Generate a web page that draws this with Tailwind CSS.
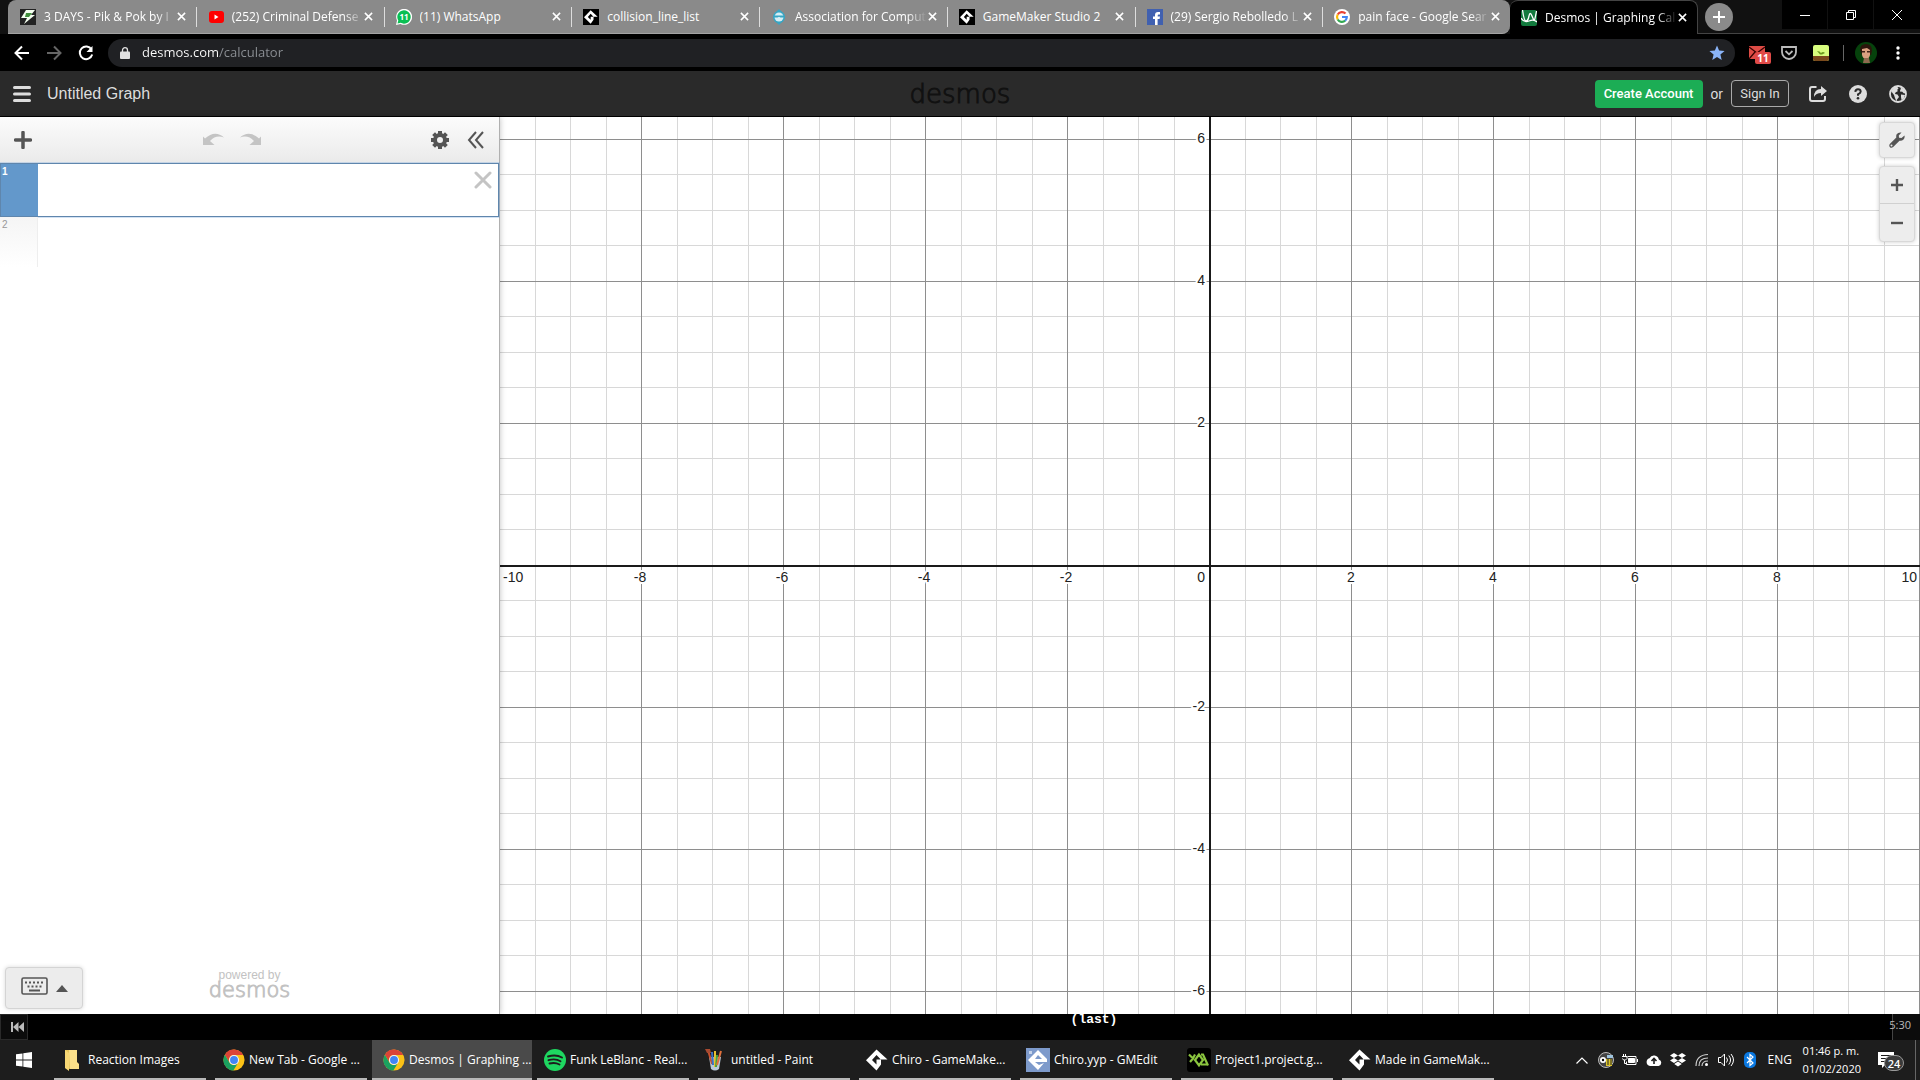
<!DOCTYPE html>
<html lang="en">
<head>
<meta charset="utf-8">
<title>Desmos | Graphing Calculator</title>
<script src="https://cdn.jsdelivr.net/npm/@tailwindcss/browser@4"></script>
</head>
<body class="flex h-screen flex-col overflow-hidden bg-black font-['Open_Sans','Noto_Sans',sans-serif] text-xs text-white">

<svg class="hidden" aria-hidden="true">
  <symbol id="x" viewBox="0 0 10 10"><path d="M1 1l8 8M9 1L1 9" stroke="currentColor" stroke-width="1.700" fill="none"/></symbol>
  <symbol id="gm" viewBox="0 0 22 22"><path d="M10.500 0.500L21.500 10.500H15V15.500L10.500 21.500L0 11.200ZM10.500 6L6 11L10.500 15.500V10.500H14.800Z" fill="#fff" fill-rule="evenodd"/></symbol>
  <symbol id="chrome" viewBox="0 0 24 24"><circle cx="12" cy="12" r="11.500" fill="#fbc116"/><path d="M2 6.200A11.500 11.500 0 0 1 22 6.500H12A5.500 5.500 0 0 0 7.200 15Z" fill="#db4437"/><path d="M2 6.200L7.200 15A5.500 5.500 0 0 0 16.500 15L11.300 23.500A11.500 11.500 0 0 1 2 6.200Z" fill="#1aa260"/><circle cx="12" cy="12" r="5.500" fill="#f4f4f4"/><circle cx="12" cy="12" r="4.300" fill="#4285f4"/></symbol>
</svg>

<!-- Tab strip -->
<header class="flex h-[34px] shrink-0 bg-[#111] pl-2">
  <nav id="tabs" class="flex min-w-0 flex-1 rounded-tl-lg rounded-r-lg border-b border-[#a4a4a4] bg-[#8a8a8a]" aria-label="Tabs">
    <div class="flex min-w-0 flex-1 items-center pl-3">
      <svg class="size-4 shrink-0" viewBox="0 0 16 16"><path fill="#222" d="M0 0h16v16H0z"/><path d="M6 1h9l-4 5h4L4 15l3-6H1z" fill="#f4fff0"/><path d="M6 4h6l-3 4H5z" fill="#3f8f3b"/></svg>
      <a href="#" class="ml-2 w-[132px] overflow-hidden whitespace-nowrap mask-r-from-85%">3 DAYS - Pik &amp; Pok by I</a>
      <button class="grid h-4 w-[10px] place-items-center" aria-label="Close tab"><svg class="size-[9px]"><use href="#x"/></svg></button>
    </div>
    <div class="relative flex min-w-0 flex-1 items-center pl-3">
      <i class="absolute left-0 h-5 w-px bg-[#ddd]"></i>
      <svg class="size-4 shrink-0" viewBox="0 0 16 16"><rect x="1" y="2" width="15" height="12" rx="3" fill="#f00"/><path d="M6.500 5.500v5l4-2.500z" fill="#fff"/></svg>
      <a href="#" class="ml-2 w-[132px] overflow-hidden whitespace-nowrap mask-r-from-85%">(252) Criminal Defense</a>
      <button class="grid h-4 w-[10px] place-items-center" aria-label="Close tab"><svg class="size-[9px]"><use href="#x"/></svg></button>
    </div>
    <div class="relative flex min-w-0 flex-1 items-center pl-3">
      <i class="absolute left-0 h-5 w-px bg-[#ddd]"></i>
      <svg class="size-4 shrink-0" viewBox="0 0 16 16"><path d="M0 16l1-4.500A8 8 0 1 1 4.500 15z" fill="#fff"/><path d="M1.500 14.500l.8-3A6.700 6.700 0 1 1 4.700 13.800z" fill="#0abf53"/><text x="8" y="11" font-size="8" font-weight="700" text-anchor="middle" fill="#fff">11</text></svg>
      <a href="#" class="ml-2 w-[132px] overflow-hidden whitespace-nowrap">(11) WhatsApp</a>
      <button class="grid h-4 w-[10px] place-items-center" aria-label="Close tab"><svg class="size-[9px]"><use href="#x"/></svg></button>
    </div>
    <div class="relative flex min-w-0 flex-1 items-center pl-3">
      <i class="absolute left-0 h-5 w-px bg-[#ddd]"></i>
      <span class="grid size-4 shrink-0 place-items-center bg-black"><svg class="size-[14px]"><use href="#gm"/></svg></span>
      <a href="#" class="ml-2 w-[132px] overflow-hidden whitespace-nowrap">collision_line_list</a>
      <button class="grid h-4 w-[10px] place-items-center" aria-label="Close tab"><svg class="size-[9px]"><use href="#x"/></svg></button>
    </div>
    <div class="relative flex min-w-0 flex-1 items-center pl-3">
      <i class="absolute left-0 h-5 w-px bg-[#ddd]"></i>
      <svg class="size-4 shrink-0" viewBox="0 0 16 16"><path d="M8 0l3 3 3 5-3 5-3 3-3-3-3-5 3-5z" fill="#37a5c4"/><circle cx="8" cy="8" r="6" fill="#37a5c4"/><circle cx="8" cy="8" r="4.500" fill="#d6eef5"/><path d="M3 6.500h10v2H9.500L8 7.800l-1.500.7H3z" fill="#37a5c4"/></svg>
      <a href="#" class="ml-2 w-[132px] overflow-hidden whitespace-nowrap mask-r-from-85%">Association for Comput</a>
      <button class="grid h-4 w-[10px] place-items-center" aria-label="Close tab"><svg class="size-[9px]"><use href="#x"/></svg></button>
    </div>
    <div class="relative flex min-w-0 flex-1 items-center pl-3">
      <i class="absolute left-0 h-5 w-px bg-[#ddd]"></i>
      <span class="grid size-4 shrink-0 place-items-center bg-black"><svg class="size-[14px]"><use href="#gm"/></svg></span>
      <a href="#" class="ml-2 w-[132px] overflow-hidden whitespace-nowrap">GameMaker Studio 2</a>
      <button class="grid h-4 w-[10px] place-items-center" aria-label="Close tab"><svg class="size-[9px]"><use href="#x"/></svg></button>
    </div>
    <div class="relative flex min-w-0 flex-1 items-center pl-3">
      <i class="absolute left-0 h-5 w-px bg-[#ddd]"></i>
      <svg class="size-4 shrink-0" viewBox="0 0 16 16"><path fill="#4060b0" d="M0 0h16v16H0z"/><path d="M8 16V10H6V7.500h2V6q0-3 3-3h2v2.500h-1.300q-1 0-1 1v1H13L12.600 10h-2v6z" fill="#fff"/></svg>
      <a href="#" class="ml-2 w-[132px] overflow-hidden whitespace-nowrap mask-r-from-85%">(29) Sergio Rebolledo L</a>
      <button class="grid h-4 w-[10px] place-items-center" aria-label="Close tab"><svg class="size-[9px]"><use href="#x"/></svg></button>
    </div>
    <div class="relative flex min-w-0 flex-1 items-center pl-3">
      <i class="absolute left-0 h-5 w-px bg-[#ddd]"></i>
      <svg class="size-4 shrink-0" viewBox="0 0 16 16" fill="none" stroke-width="2.200"><circle cx="8" cy="8" r="8" fill="#fff"/><path d="M11.500 4.500A5 5 0 0 0 3.700 5.500" stroke="#ea4335"/><path d="M3.700 5.500a5 5 0 0 0 0 5" stroke="#fbbc05"/><path d="M3.700 10.500a5 5 0 0 0 7.500 1.200" stroke="#34a853"/><path d="M8 8h4.800a5 5 0 0 1-1.600 3.700" stroke="#4285f4"/></svg>
      <a href="#" class="ml-2 w-[132px] overflow-hidden whitespace-nowrap mask-r-from-85%">pain face - Google Sear</a>
      <button class="grid h-4 w-[10px] place-items-center" aria-label="Close tab"><svg class="size-[9px]"><use href="#x"/></svg></button>
    </div>
  </nav>
  <div class="flex w-[188px] shrink-0 items-center rounded-t-lg border-t border-r border-[#444] bg-black pl-[11px]">
    <svg class="size-4 shrink-0" viewBox="0 0 16 16"><rect width="16" height="16" rx="2" fill="#127a3d"/><path d="M1.500 0Q3 11 5 11T8 6t3 0 2.500 4T15.500 1M0 8q3 5 8 3t8 1" fill="none" stroke="#fff" stroke-width="1.300"/></svg>
    <a href="#" aria-current="page" class="ml-2 w-[132px] overflow-hidden whitespace-nowrap mask-r-from-85%">Desmos | Graphing Cal</a>
    <button class="grid h-4 w-[10px] place-items-center" aria-label="Close tab"><svg class="size-[9px]"><use href="#x"/></svg></button>
  </div>
  <div class="flex w-[222px] shrink-0 items-start border-b border-[#444]">
    <button class="mt-[3px] ml-[7px] grid size-7 place-items-center rounded-full bg-[#8a8a8a]" aria-label="New tab"><svg class="size-3" viewBox="0 0 12 12"><path d="M6 0v12M0 6h12" stroke="#fff" stroke-width="2"/></svg></button>
    <div class="ml-auto flex h-[29px] gap-px">
      <button class="grid w-[45px] place-items-center bg-black" aria-label="Minimize"><svg class="size-[10px]" viewBox="0 0 10 10"><path d="M0 5.500h10" stroke="#fff"/></svg></button>
      <button class="grid w-[45px] place-items-center bg-black" aria-label="Restore"><svg class="size-[10px]" viewBox="0 0 10 10" fill="none" stroke="#fff"><path d="M.5 2.500h7v7h-7zM2.500 2.500v-2h7v7h-2"/></svg></button>
      <button class="grid w-[46px] place-items-center bg-black" aria-label="Close"><svg class="size-[10px]" viewBox="0 0 10 10"><path d="M0 0l10 10M10 0L0 10" stroke="#fff"/></svg></button>
    </div>
  </div>
</header>

<!-- Address bar -->
<div class="flex h-[37px] shrink-0 items-center bg-black pr-5 pl-[14px]">
  <button aria-label="Back"><svg class="size-4" viewBox="0 0 16 16" fill="none" stroke="#fff" stroke-width="2"><path d="M15 8H2M8 1.500L1.500 8L8 14.500"/></svg></button>
  <button aria-label="Forward" class="ml-4"><svg class="size-4" viewBox="0 0 16 16" fill="none" stroke="#666" stroke-width="2"><path d="M1 8h13M8 1.500L14.500 8L8 14.500"/></svg></button>
  <button aria-label="Reload" class="ml-4"><svg class="size-4" viewBox="0 0 16 16" fill="none" stroke="#fff" stroke-width="2"><path d="M13.500 4.500A6.300 6.300 0 1 0 14.200 9.500"/><path d="M14.500 1v6h-6z" fill="#fff" stroke="none"/></svg></button>
  <div class="ml-[14px] flex h-7 flex-1 items-center rounded-full bg-[#202124] pr-[10px] pl-3">
    <svg class="h-3 w-[10px]" viewBox="0 0 10 12"><rect y="4.500" width="10" height="7.500" rx="1" fill="#e0e0e0"/><path d="M2.500 5V3.200a2.500 2.500 0 0 1 5 0V5" fill="none" stroke="#e0e0e0" stroke-width="1.300"/></svg>
    <input aria-label="Address" value="desmos.com/calculator" class="ml-3 flex-1 bg-[linear-gradient(to_right,#fff_77px,#8d9196_77px)] bg-clip-text text-[13px] text-transparent outline-none">
    <svg class="size-4" viewBox="0 0 16 16"><path d="M8 0.500l2.100 5.100 5.500.4-4.200 3.600 1.300 5.400L8 12.100 3.300 15l1.300-5.400L.4 6l5.500-.4z" fill="#8ab4f8"/></svg>
  </div>
  <button aria-label="Mail, 11 unread" class="relative ml-[14px] h-5 w-6">
    <svg class="h-4 w-4" viewBox="0 0 16 16"><rect y="1" width="16" height="13" fill="#dd4b45"/><path d="M0 2l8 6 8-6M0 14l6-7M16 14l-6-7" fill="none" stroke="#300" stroke-width="1.200"/></svg>
    <span class="absolute top-[9px] left-[6px] grid h-3 w-4 place-items-center rounded-xs bg-[#e04a47] text-[10px] leading-none font-bold">11</span>
  </button>
  <button aria-label="Pocket" class="ml-2"><svg class="size-4" viewBox="0 0 16 16" fill="none" stroke="#bbb" stroke-width="1.800"><path d="M1 2h14v5a7 7 0 0 1-14 0z"/><path d="M4.500 6L8 9.300 11.500 6"/></svg></button>
  <button aria-label="Garden" class="ml-4"><svg class="size-4" viewBox="0 0 16 16"><rect width="16" height="16" rx="2" fill="#d8fd7e"/><path d="M0 11h16v3a2 2 0 0 1-2 2H2a2 2 0 0 1-2-2z" fill="#7a4a1c"/><path d="M4 6q3 0 4 2 2-2 4 0l-3 1.500H7z" fill="#6a9a1e"/></svg></button>
  <i class="ml-[14px] h-4 w-px bg-[#666]"></i>
  <button aria-label="Profile" class="ml-[11px]"><svg class="size-[22px]" viewBox="0 0 22 22"><circle cx="11" cy="11" r="11" fill="#06420c"/><path d="M5 8q0-6 6-6 6 0 6 7l-1 4H7z" fill="#2c150c"/><path d="M7 7l5-1 3 2v5q-1 4-4 4t-4-4z" fill="#d9a080"/><path d="M7 9h3v1.500H7zM12 9h3v1.500h-3z" fill="#3e2117"/><path d="M9 16h5l1 5H8z" fill="#8e6a50"/></svg></button>
  <button aria-label="Menu" class="ml-[19px]"><svg class="h-4 w-1" viewBox="0 0 4 16" fill="#fff"><circle cx="2" cy="3" r="1.700"/><circle cx="2" cy="8" r="1.700"/><circle cx="2" cy="13" r="1.700"/></svg></button>
</div>

<!-- Desmos header -->
<div class="grid h-[46px] shrink-0 grid-cols-[1fr_auto_1fr] items-center border-b border-black bg-[#2a2a2a] px-[13px] font-['Liberation_Sans',sans-serif] text-[#ddd]">
  <div class="flex items-center">
    <button aria-label="Open menu"><svg class="h-4 w-[18px]" viewBox="0 0 18 16" stroke="#ddd" stroke-width="3" stroke-linecap="round"><path d="M1.500 1.500h15M1.500 8h15M1.500 14.500h15"/></svg></button>
    <h1 class="ml-4 text-base">Untitled Graph</h1>
  </div>
  <div class="font-['DejaVu_Sans'] text-[26px] leading-none font-extralight text-[#111] [-webkit-text-stroke:1px_#111]">desmos</div>
  <div class="flex items-center justify-end">
    <button class="h-7 w-[108px] rounded-sm bg-[#1cad55] font-[Roboto] text-[13px] font-medium text-white">Create Account</button>
    <span class="mx-2 text-sm">or</span>
    <button class="h-[27px] w-[58px] rounded-sm border border-[#aaa] font-[Roboto] text-[13px]">Sign In</button>
    <button aria-label="Share" class="ml-5"><svg class="size-[18px]" viewBox="0 0 18 18"><path d="M7.500 2H3a2 2 0 0 0-2 2v10a2 2 0 0 0 2 2h11a2 2 0 0 0 2-2v-3" fill="none" stroke="#ddd" stroke-width="2"/><path d="M12 1l6 5-6 5V8q-5 0-7 4 0-8 7-8z" fill="#ddd"/></svg></button>
    <button aria-label="Help" class="ml-[22px]"><svg class="size-[18px]" viewBox="0 0 18 18"><circle cx="9" cy="9" r="9" fill="#ddd"/><path d="M6.300 6.800Q6.500 4.200 9 4.200t2.700 2.300Q11.700 8 9 9.300v1.500" fill="none" stroke="#2a2a2a" stroke-width="2"/><circle cx="9" cy="13.300" r="1.300" fill="#2a2a2a"/></svg></button>
    <button aria-label="Language" class="ml-[22px]"><svg class="size-[18px]" viewBox="0 0 18 18"><circle cx="9" cy="9" r="8" fill="none" stroke="#ddd" stroke-width="1.800"/><path d="M2 6l3-4 3-.5 1.500 2L8 5l1 1-2.500 1.500L6 9l2.500.5L10 12l-2 2.500-.5 2L6 13 5 10zM11 2l4 2 1.500 4-1.500.5-2-2-1.500.5-.5-2 1-1zM12 9.500l4 .5-1.500 4-2 1-.5-3z" fill="#ddd"/></svg></button>
  </div>
</div>

<main class="flex min-h-0 flex-1 bg-white font-['Liberation_Sans',sans-serif]">
  <!-- Expression list -->
  <section class="z-10 flex w-[500px] shrink-0 flex-col border-r border-[#b0b0b0] bg-white shadow-[0_0_6px_rgba(0,0,0,0.25)]">
    <div class="flex h-[46px] shrink-0 items-center bg-linear-to-b from-[#fcfcfc] to-[#eaeaea] pr-[15px] pl-[14px]">
      <button aria-label="Add item"><svg class="size-[18px]" viewBox="0 0 18 18"><path d="M9 1.500v15M1.500 9h15" stroke="#555" stroke-width="3.500" stroke-linecap="round"/></svg></button>
      <div class="mx-auto flex gap-4">
        <button aria-label="Undo"><svg class="h-[14px] w-[21px]" viewBox="0 0 21 14"><path d="M0 3.500l2 2Q12-3.500 21 4.500 13 1.500 7 8l4.500 4H0z" fill="#c4c4c4"/></svg></button>
        <button aria-label="Redo"><svg class="h-[14px] w-[21px]" viewBox="0 0 21 14"><path d="M21 3.500l-2 2Q9-3.500 0 4.500 8 1.500 14 8l-4.500 4H21z" fill="#c4c4c4"/></svg></button>
      </div>
      <button aria-label="Edit list"><svg class="size-[18px]" viewBox="0 0 18 18" fill="none" stroke="#555"><circle cx="9" cy="9" r="5" stroke-width="4"/><path d="M9 0v3M9 15v3M0 9h3M15 9h3M2.600 2.600l2.200 2.200M13.200 13.200l2.200 2.200M15.400 2.600l-2.200 2.200M4.800 13.200l-2.200 2.200" stroke-width="4"/></svg></button>
      <button aria-label="Hide list" class="ml-[18px]"><svg class="h-[18px] w-[17px]" viewBox="0 0 17 18" fill="none" stroke="#555" stroke-width="2"><path d="M9 1L2 9l7 8M16 1L9 9l7 8"/></svg></button>
    </div>
    <div class="flex h-[54px] shrink-0 border border-[#5f86ad] bg-white ring-1 ring-[#6ca0d8]/30">
      <label for="expr" class="w-[37px] bg-[#6398cb] pt-[2px] pl-px text-[10px] leading-3 font-bold">1</label>
      <input id="expr" class="min-w-0 flex-1 px-3 text-lg text-black outline-none">
      <button aria-label="Delete expression" class="mt-[7px] mr-[6px] size-[18px]"><svg class="size-[18px]" viewBox="0 0 18 18"><path d="M2 2l14 14M16 2L2 16" stroke="#c4c4c4" stroke-width="3" stroke-linecap="round"/></svg></button>
    </div>
    <div class="h-[50px] w-[38px] border-r border-[#eee] bg-linear-to-b from-[#f5f5f5] to-white pt-[1px] pl-[2px] text-[10px] text-[#999]">2</div>
    <footer class="mt-auto grid grid-cols-[1fr_auto_1fr] items-center px-[5px] pb-[5px]">
      <button aria-label="Show keypad" class="flex h-[42px] w-[78px] items-center justify-center gap-2 rounded-sm border border-[#d4d4d4] bg-[#ececec] shadow-[0_0_4px_rgba(0,0,0,0.15)]">
        <svg class="mb-1 h-[18px] w-[27px]" viewBox="0 0 27 18" fill="none" stroke="#555"><rect x="1" y="1" width="25" height="16" rx="1.500" stroke-width="1.600"/><path d="M4 5.500h19M6.500 9.500h15" stroke-width="2" stroke-dasharray="2 2"/><path d="M8 13.500h11" stroke-width="2"/></svg>
        <svg class="h-[7px] w-3" viewBox="0 0 12 7"><path d="M6 0l6 7H0z" fill="#555"/></svg>
      </button>
      <div class="flex flex-col items-center pb-[9px] text-[#c2c2c2]">
        <span class="text-xs leading-3">powered by</span>
        <span class="font-['DejaVu_Sans'] text-[21px] leading-[18px] font-extralight [-webkit-text-stroke:1px_#c2c2c2]">desmos</span>
      </div>
    </footer>
  </section>

  <!-- Graph paper -->
  <section class="relative min-w-0 flex-1">
    <svg id="graph" class="absolute inset-0 size-full text-sm" role="img" aria-label="Empty coordinate grid"></svg>
    <div class="absolute top-[5px] right-[5px] flex flex-col gap-2">
      <button aria-label="Graph settings" class="grid size-9 place-items-center rounded-sm border border-[#d8d8d8] bg-[#ededed] shadow-[0_0_4px_rgba(0,0,0,0.2)]"><svg class="size-4" viewBox="0 0 16 16"><path d="M15.500 3.500L12.500 6 10 5.800 9.800 3.500 12.500.5Q9 0 7.500 2.500 7 4 7.300 5.500L.8 12Q-.3 14 1 15.200T4.200 15L10.500 8.700Q13 9 14.500 7.500 16 6 15.500 3.500ZM2.500 12.500a1 1 0 1 1 0 2 1 1 0 0 1 0-2z" fill="#555" fill-rule="evenodd"/></svg></button>
      <div class="flex w-9 flex-col divide-y divide-[#d0d0d0] rounded-sm border border-[#d8d8d8] bg-[#ededed] shadow-[0_0_4px_rgba(0,0,0,0.2)]">
        <button aria-label="Zoom in" class="grid h-[37px] place-items-center"><svg class="size-3" viewBox="0 0 12 12"><path d="M6 0v12M0 6h12" stroke="#555" stroke-width="2.400"/></svg></button>
        <button aria-label="Zoom out" class="grid h-[37px] place-items-center"><svg class="size-3" viewBox="0 0 12 12"><path d="M0 6h12" stroke="#555" stroke-width="2.400"/></svg></button>
      </div>
    </div>
  </section>
</main>

<!-- Media strip -->
<div class="grid h-[26px] shrink-0 grid-cols-[28px_1fr_28px] bg-black">
  <button aria-label="Previous" class="flex items-center justify-end border border-[#2a2a2a] bg-[#0c0c0c] pr-[3px]"><svg class="h-[10px] w-[13px]" viewBox="0 0 13 10" fill="#bbb"><path d="M0 0h2v10H0zM7.500 0v10L2 5zM13 0v10L7.500 5z"/></svg></button>
  <div class="pl-[268px] text-center font-['Liberation_Mono',monospace] text-[13px] leading-3 font-bold">(last)</div>
  <div class="flex justify-end border-l border-[#444] bg-[#0c0c0c] pt-[3px] pr-[9px] text-[11px] leading-4 text-[#bbb]">5:30</div>
</div>

<!-- Taskbar -->
<footer class="flex h-10 shrink-0 bg-[#1d1d1d]">
  <button aria-label="Start" class="w-[50px] pl-4"><svg class="size-4" viewBox="0 0 16 16" fill="#fff"><path d="M0 2.300l6.500-.9v6.100H0zM7.300 1.300L16 0v7.500H7.300zM0 8.400h6.500v6.200L0 13.700zM7.300 8.400H16V16l-8.700-1.200z"/></svg></button>
  <nav class="flex gap-px" aria-label="Running programs">
    <button class="relative flex w-40 items-center pl-3 after:absolute after:inset-x-1 after:bottom-0 after:h-[2px] after:bg-[#b8b8b8]"><svg class="size-[22px] shrink-0" viewBox="0 0 22 22"><path d="M3 1h5v19l-5-1z" fill="#e8c65c"/><path d="M7 1h8v12l2 2v5H8z" fill="#fbe08a"/><path d="M3 1l4 3v18l-4-3z" fill="#f7d774"/></svg><span class="ml-1 whitespace-nowrap">Reaction Images</span></button>
    <button class="relative flex w-40 items-center pl-3 after:absolute after:inset-x-1 after:bottom-0 after:h-[2px] after:bg-[#b8b8b8]"><svg class="size-[22px] shrink-0"><use href="#chrome"/></svg><span class="ml-1 whitespace-nowrap">New Tab - Google ...</span></button>
    <button class="relative flex w-40 items-center bg-[#4a4a4a] pl-[11px] after:absolute after:inset-x-0 after:bottom-0 after:h-[2px] after:bg-[#b8b8b8]"><svg class="size-[22px] shrink-0"><use href="#chrome"/></svg><span class="ml-1 whitespace-nowrap">Desmos | Graphing ...</span></button>
    <button class="relative flex w-40 items-center pl-[11px] after:absolute after:inset-x-1 after:bottom-0 after:h-[2px] after:bg-[#b8b8b8]"><svg class="size-[22px] shrink-0" viewBox="0 0 22 22"><circle cx="11" cy="11" r="11" fill="#1ed760"/><path d="M4 7.500q8-2.500 14 1M4.500 11.200q7-2 12 1M5.500 14.500q5.500-1.500 10 1" fill="none" stroke="#1d1d1d" stroke-width="1.900" stroke-linecap="round"/></svg><span class="ml-1 whitespace-nowrap">Funk LeBlanc - Real...</span></button>
    <button class="relative flex w-40 items-center pl-[11px] after:absolute after:inset-x-1 after:bottom-0 after:h-[2px] after:bg-[#b8b8b8]"><svg class="size-[22px] shrink-0" viewBox="0 0 22 22"><path d="M4 8h12l-2 12q-4 3-8 0z" fill="#b8c8d8"/><g stroke-width="2"><path d="M3 1l4 14" stroke="#c8502c"/><path d="M7 3l1 13" stroke="#3b6fc4"/><path d="M10 2v16" stroke="#e8c030"/><path d="M12 6l-1 12" stroke="#44a040"/><path d="M16 2l-4 14" stroke="#e0703c"/></g><path d="M0 0h5l1 4H2z" fill="#a84a30"/></svg><span class="ml-1 whitespace-nowrap">untitled - Paint</span></button>
    <button class="relative flex w-40 items-center pl-[11px] after:absolute after:inset-x-1 after:bottom-0 after:h-[2px] after:bg-[#b8b8b8]"><svg class="size-[22px] shrink-0"><use href="#gm"/></svg><span class="ml-1 whitespace-nowrap">Chiro - GameMake...</span></button>
    <button class="relative flex w-40 items-center pl-[10px] after:absolute after:inset-x-1 after:bottom-0 after:h-[2px] after:bg-[#b8b8b8]"><svg class="size-6 shrink-0" viewBox="0 0 24 24"><path fill="#7d9acb" d="M0 0h24v24H0z"/><path d="M12 2l9 9v3H9l4 3 5-2-6 7L2 12zM9 11h7l-4-4z" fill="#fff" fill-rule="evenodd"/><path d="M3 3h3v3H3z" fill="#c5d3ea"/></svg><span class="ml-1 whitespace-nowrap">Chiro.yyp - GMEdit</span></button>
    <button class="relative flex w-40 items-center pl-[10px] after:absolute after:inset-x-1 after:bottom-0 after:h-[2px] after:bg-[#b8b8b8]"><svg class="size-6 shrink-0" viewBox="0 0 24 24"><rect width="24" height="24" rx="3" fill="#000"/><path d="M2 6.500l4 4 2-4M6 10.500L3 14M12 6.500L8 12l4 5.500 4-5.500zM14 6.500h2l5 11M14 16.500h7" fill="none" stroke="#8bc53f" stroke-width="2.200"/></svg><span class="ml-1 whitespace-nowrap">Project1.project.g...</span></button>
    <button class="relative flex w-40 items-center pl-[11px] after:absolute after:inset-x-1 after:bottom-0 after:h-[2px] after:bg-[#b8b8b8]"><svg class="size-[22px] shrink-0"><use href="#gm"/></svg><span class="ml-1 whitespace-nowrap">Made in GameMak...</span></button>
  </nav>
  <div class="ml-auto flex items-center">
    <button aria-label="Show hidden icons"><svg class="h-[7px] w-3" viewBox="0 0 12 7"><path d="M.5 6.500L6 1l5.500 5.500" fill="none" stroke="#fff" stroke-width="1.200"/></svg></button>
    <div class="ml-[10px] flex items-center gap-2">
      <svg class="size-4" viewBox="0 0 16 16"><circle cx="8" cy="8" r="7.500" fill="#444" stroke="#bbb"/><circle cx="5" cy="8" r="3" fill="#fff"/><circle cx="5" cy="8" r="1.200" fill="#000"/><path d="M8 7h6v7H8z" fill="#dcc52c"/><path d="M9 3h6v3H9z" fill="#9ec3dd"/><path d="M10 7v6M13 7v6" stroke="#222"/></svg>
      <svg class="size-4" viewBox="0 0 16 16" fill="none" stroke="#fff"><path d="M5.500 4.500H14v8H4.500V9.500M15.500 7v3"/><path d="M6.500 6.500h6v4h-6z" fill="#fff"/><path d="M1.500 2v2.500M3.500 2v2.500M0 4.500h5v2L3.500 8h-2L.5 6.500M2.500 8v3.500h2"/></svg>
      <svg class="size-4" viewBox="0 0 16 16"><path d="M4 14a4 4 0 0 1-.5-7.800 5 5 0 0 1 9.300 1.200A3.400 3.400 0 0 1 12.600 14z" fill="#fff"/><path d="M8 12V7M5.500 9L8 6.500 10.500 9" fill="none" stroke="#1d1d1d" stroke-width="1.600"/></svg>
      <svg class="size-4" viewBox="0 0 16 16" fill="#fff"><path d="M4 1l4 2.500L4 6 0 3.500zM12 1l4 2.500L12 6 8 3.500zM4 6l4 2.500L4 11 0 8.500zM12 6l4 2.500-4 2.500-4-2.500zM8 9.500l3.800 2.400L8 14.500l-3.800-2.600z"/></svg>
      <svg class="size-4" viewBox="0 0 16 16" fill="none" stroke="#ccc" stroke-width="1.200"><path d="M2 14Q2 3 14 2.500M5 14q0-8 9-8M8 14q0-5 6-5"/><circle cx="12.500" cy="12.500" r="1.500" fill="#fff" stroke="none"/></svg>
      <svg class="size-4" viewBox="0 0 16 16" fill="none" stroke="#fff"><path d="M.5 5.500H3L6.500 2v12L3 10.500H.5zM8.500 5.500q2 2.500 0 5M10.800 3.500q3.500 4.500 0 9M13 2q5 6 0 12"/></svg>
      <svg class="h-4 w-4" viewBox="0 0 16 16"><rect x="2" width="12" height="16" rx="5" fill="#0a78e0"/><path d="M5 5l6 6-3 2.500v-11L11 5l-6 6" fill="none" stroke="#fff" stroke-width="1.200"/></svg>
    </div>
    <button class="ml-[10px] w-[23px] text-xs">ENG</button>
    <button class="ml-3 text-left text-[11px] leading-[18px] whitespace-nowrap">01:46 p. m.<br>01/02/2020</button>
    <button aria-label="24 notifications" class="relative ml-[17px] h-6 w-7"><svg class="size-4" viewBox="0 0 16 16"><path d="M0 0h16v13H7l-3 3v-3H0z" fill="#fff"/><path d="M3 3.500h10M3 6.500h10M3 9.500h6" stroke="#1d1d1d" stroke-width="1.200"/></svg><span class="absolute top-[7px] left-[6px] grid h-4 w-5 place-items-center rounded-full border border-[#999] bg-[#3a3a3a] text-[11px] leading-none font-semibold">24</span></button>
    <button aria-label="Show desktop" class="ml-[9px] h-10 w-[5px] border-l border-[#666]"></button>
  </div>
</footer>

<script>
  // Draws grid, axes and numbers: 20 units across, origin in the centre.
  const svg = document.getElementById('graph');
  function draw() {
    const w = svg.parentElement.clientWidth, h = svg.parentElement.clientHeight;
    const unit = w / 20, cx = w / 2, cy = h / 2;
    let minor = '', major = '', labels = '';
    const text = (x, y, t, anchor) => labels += `<text x="${x}" y="${y}" text-anchor="${anchor}">${t}</text>`;
    for (let k = -20; k <= 20; k++) {
      const x = Math.floor(cx + k * unit / 2 - 0.5);
      const line = `M${x + 0.5} 0V${h}`;
      k % 4 ? minor += line : major += line;
      if (k % 4 === 0) {
        const n = k / 2;
        if (n === -10) text(3, cy + 16, n, 'start');
        else if (n === 10) text(w - 3, cy + 16, n, 'end');
        else if (n === 0) text(cx - 5, cy + 16, 0, 'end');
        else text(n < 0 ? x - 1 : x, cy + 16, n, 'middle');
      }
    }
    const rows = Math.floor(cy / (unit / 2));
    for (let k = -rows; k <= rows; k++) {
      const y = Math.floor(cy - k * unit / 2 - 0.5);
      const line = `M0 ${y + 0.5}H${w}`;
      k % 4 ? minor += line : major += line;
      if (k && k % 4 === 0) text(cx - 5, y + 4, k / 2, 'end');
    }
    svg.innerHTML = `<g fill="none"><path d="${minor}" stroke="#d8d8d8"/><path d="${major}" stroke="#8e8e8e"/>
      <path d="M${cx} 0V${h}M0 ${Math.round(cy)}H${w}" stroke="#1a1a1a" stroke-width="2"/></g>
      <g fill="#222" stroke="#fff" stroke-width="4" stroke-linejoin="round" paint-order="stroke">${labels}</g>`;
  }
  new ResizeObserver(draw).observe(svg.parentElement);
  addEventListener('load', draw);
</script>
</body>
</html>
